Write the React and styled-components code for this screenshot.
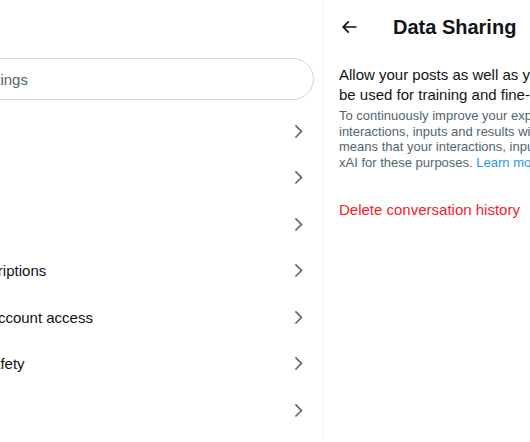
import React from 'react';
import styled, { createGlobalStyle } from 'styled-components';

const GlobalStyle = createGlobalStyle`
  *, *::before, *::after {
    box-sizing: border-box;
  }
  html, body {
    margin: 0;
    padding: 0;
    background: #ffffff;
    overflow: hidden;
  }
  body {
    font-family: "Liberation Sans", Arial, "Noto Sans", sans-serif;
    color: #0f1419;
    -webkit-font-smoothing: antialiased;
  }
`;

const Page = styled.div`
  display: flex;
  align-items: flex-start;
  height: 442px;
  overflow: hidden;
`;

// the settings list is wider than the view, its left part is scrolled out
const SettingsColumn = styled.div`
  flex: 0 0 auto;
  width: 437px;
  margin-left: -114px;
  min-height: 442px;
  border-right: 1px solid #eff3f4;
`;

const ColumnHeader = styled.div`
  height: 53px;
  padding: 0 16px;
  display: flex;
  align-items: center;
  font-size: 20px;
  font-weight: 700;
`;

const SearchWrap = styled.div`
  padding: 5px 8px 8px 2px;
`;

const SearchBox = styled.div`
  height: 42px;
  border: 1px solid #cfd9de;
  border-radius: 9999px;
  display: flex;
  align-items: center;
  gap: 5px;
  padding: 0 12px;
  color: #536471;
  font-size: 15px;
`;

const SearchIcon = styled.svg`
  width: 16px;
  height: 16px;
  fill: #536471;
`;

const SettingsRow = styled.div`
  height: 46.5px;
  padding: 0 14px 0 16px;
  display: flex;
  align-items: center;
  justify-content: space-between;
  font-size: 15px;
  color: #0f1419;
  white-space: nowrap;
`;

const Chevron = styled.svg`
  width: 18.75px;
  height: 18.75px;
  fill: #536471;
  flex: 0 0 auto;
`;

const DetailPanel = styled.div`
  flex: 0 0 600px;
`;

const PanelHeader = styled.div`
  height: 53px;
  padding: 0 16px;
  display: flex;
  align-items: center;
`;

const BackButton = styled.div`
  min-width: 54px;
  display: flex;
  align-items: center;
`;

const BackIcon = styled.svg`
  width: 20px;
  height: 20px;
  fill: #0f1419;
`;

const PanelTitle = styled.h2`
  margin: 0;
  font-size: 20px;
  font-weight: 700;
  line-height: 24px;
  white-space: nowrap;
`;

const PanelBody = styled.div`
  padding: 12px 16px 16px;
`;

const Lead = styled.p`
  margin: 0;
  font-size: 15px;
  line-height: 20px;
  white-space: nowrap;
`;

const Note = styled.p`
  margin: 3px 0 0;
  font-size: 13px;
  line-height: 15.5px;
  color: #536471;
  white-space: nowrap;
`;

const LearnMore = styled.span`
  color: #1d9bf0;
`;

const DangerAction = styled.div`
  padding: 14px 16px;
  font-size: 15px;
  line-height: 20px;
  color: #f4212e;
`;

const settings = [
  'Your account',
  'Monetization',
  'Premium',
  'Creator Subscriptions',
  'Security and account access',
  'Privacy and safety',
  'Notifications',
  'Accessibility, display, and languages',
];

const ChevronIcon = () => (
  <Chevron viewBox="0 0 24 24">
    <path d="M14.586 12L7.543 4.96l1.414-1.42L17.414 12l-8.457 8.46-1.414-1.42L14.586 12z" />
  </Chevron>
);

export default function App() {
  return (
    <>
      <GlobalStyle />
      <Page>
        <SettingsColumn>
          <ColumnHeader>Settings</ColumnHeader>
          <SearchWrap>
            <SearchBox>
              <SearchIcon viewBox="0 0 24 24">
                <path d="M10.25 3.75c-3.59 0-6.5 2.910-6.5 6.5s2.91 6.5 6.5 6.5c1.795 0 3.419-.726 4.596-1.904 1.178-1.177 1.904-2.801 1.904-4.596 0-3.59-2.910-6.5-6.5-6.5zm-8.5 6.5c0-4.694 3.806-8.5 8.5-8.5s8.5 3.806 8.5 8.5c0 1.986-.682 3.815-1.824 5.262l4.781 4.781-1.414 1.414-4.781-4.781c-1.447 1.142-3.276 1.824-5.262 1.824-4.694 0-8.5-3.806-8.5-8.5z" />
              </SearchIcon>
              Search Settings
            </SearchBox>
          </SearchWrap>
          {settings.map((label) => (
            <SettingsRow key={label}>
              <span>{label}</span>
              <ChevronIcon />
            </SettingsRow>
          ))}
        </SettingsColumn>
        <DetailPanel>
          <PanelHeader>
            <BackButton>
              <BackIcon viewBox="0 0 24 24">
                <path d="M7.414 13l5.043 5.04-1.414 1.42L3.586 12l7.457-7.46 1.414 1.42L7.414 11H21v2H7.414z" />
              </BackIcon>
            </BackButton>
            <PanelTitle>Data Sharing</PanelTitle>
          </PanelHeader>
          <PanelBody>
            <Lead>
              Allow your posts as well as your interactions, inputs, and results with Grok to
              <br />
              be used for training and fine-tuning.
            </Lead>
            <Note>
              To continuously improve your experience, we may utilize your X posts as well as your user
              <br />
              interactions, inputs and results with Grok for training and fine-tuning purposes. This also
              <br />
              means that your interactions, inputs, and results may also be shared with our service provider
              <br />
              xAI for these purposes. <LearnMore>Learn more</LearnMore>
            </Note>
          </PanelBody>
          <DangerAction>Delete conversation history</DangerAction>
        </DetailPanel>
      </Page>
    </>
  );
}
